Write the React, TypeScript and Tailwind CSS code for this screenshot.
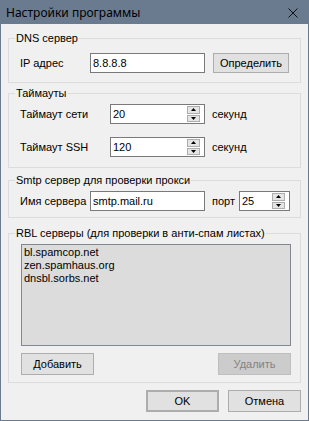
import type { ReactNode } from 'react';

const font = { fontFamily: '"Liberation Sans", Arial, sans-serif' };

function GroupBox({ title, className, children }: { title: string; className?: string; children: ReactNode }) {
  return (
    <fieldset className={`min-w-0 border border-[#dcdcdc] pl-[11px] pr-[9px] ${className ?? ''}`}>
      <legend className="-ml-[5px] px-[1px] text-[11px] leading-[13px] text-black">{title}</legend>
      {children}
    </fieldset>
  );
}

function Arrow({ up }: { up?: boolean }) {
  return (
    <div className="flex flex-1 items-center justify-center border border-[#adadad] bg-[#e5e5e5]">
      <svg width="5" height="3" viewBox="0 0 5 3">
        <polygon points={up ? '2.5,0 5,3 0,3' : '0,0 5,0 2.5,3'} fill="#000" />
      </svg>
    </div>
  );
}

function Spin({ value, className }: { value: string; className?: string }) {
  return (
    <div className={`flex h-[20px] border border-[#7a7a7a] bg-white ${className ?? ''}`}>
      <span className="flex-1 pl-[2px] leading-[18px]">{value}</span>
      <div className="my-[1px] mr-[4px] flex w-[13px] flex-col gap-[1px]">
        <Arrow up />
        <Arrow />
      </div>
    </div>
  );
}

function Btn({ children, className }: { children: ReactNode; className?: string }) {
  return (
    <button
      type="button"
      className={`flex items-center justify-center border border-[#adadad] bg-[#e1e1e1] text-[11px] text-black ${className ?? ''}`}
    >
      {children}
    </button>
  );
}

export default function App() {
  return (
    <div
      className="flex h-[421px] w-[309px] flex-col border border-[#6a7b90] bg-[#f0f0f0] text-[11px] text-black"
      style={font}
    >
      {/* title bar */}
      <div className="flex h-[23px] shrink-0 items-center justify-between bg-[#6a7b90] pl-[5px] pr-[10px]">
        <span className="text-[12px] text-black" style={{ fontFamily: '"Noto Sans", sans-serif' }}>
          Настройки программы
        </span>
        <svg width="10" height="10" viewBox="0 0 10 10">
          <path d="M0.5 0.5L9.5 9.5M9.5 0.5L0.5 9.5" stroke="#111" strokeWidth="1" />
        </svg>
      </div>

      <div className="flex flex-1 flex-col px-[7px] pt-[8px]">
        {/* DNS */}
        <GroupBox title="DNS сервер" className="pb-[9px]">
          <div className="mt-[8px] flex items-center">
            <span className="w-[70px]">IP адрес</span>
            <div className="h-[20px] w-[115px] border border-[#7a7a7a] bg-white pl-[2px] leading-[18px]">8.8.8.8</div>
            <Btn className="ml-[8px] h-[20px] w-[76px]">Определить</Btn>
          </div>
        </GroupBox>

        {/* Таймауты */}
        <GroupBox title="Таймауты" className="mt-[4px] pb-[10px]">
          <div className="mt-[4px] flex items-center">
            <span className="w-[90px]">Таймаут сети</span>
            <Spin value="20" className="w-[95px]" />
            <span className="ml-[7px]">секунд</span>
          </div>
          <div className="mt-[13px] flex items-center">
            <span className="w-[90px]">Таймаут SSH</span>
            <Spin value="120" className="w-[95px]" />
            <span className="ml-[7px]">секунд</span>
          </div>
        </GroupBox>

        {/* Smtp */}
        <GroupBox title="Smtp сервер для проверки прокси" className="mt-[6px] pb-[6px]">
          <div className="mt-[4px] flex items-center">
            <span className="w-[70px]">Имя сервера</span>
            <div className="h-[20px] w-[115px] border border-[#7a7a7a] bg-white pl-[2px] leading-[18px]">smtp.mail.ru</div>
            <span className="ml-[7px] w-[27px]">порт</span>
            <Spin value="25" className="w-[51px]" />
          </div>
        </GroupBox>

        {/* RBL */}
        <GroupBox title="RBL серверы (для проверки в анти-спам листах)" className="mt-[9px] pb-[7px]">
          <div className="mt-[4px] ml-[1px] h-[102px] border border-[#828790] bg-[#dcdcdc] px-[2px] pt-[1px] leading-[13px]">
            <div>bl.spamcop.net</div>
            <div>zen.spamhaus.org</div>
            <div>dnsbl.sorbs.net</div>
          </div>
          <div className="mt-[7px] flex justify-between">
            <Btn className="ml-[1px] h-[22px] w-[73px]">Добавить</Btn>
            <button
              type="button"
              className="flex h-[22px] w-[73px] items-center justify-center border border-[#bfbfbf] bg-[#cccccc] text-[11px] text-[#838383]"
            >
              Удалить
            </button>
          </div>
        </GroupBox>

        {/* footer */}
        <div className="mt-[7px] flex justify-end gap-[9px]">
          <Btn className="h-[22px] w-[73px] border-2 border-[#0078d7]">OK</Btn>
          <Btn className="h-[22px] w-[73px]">Отмена</Btn>
        </div>
      </div>
    </div>
  );
}
